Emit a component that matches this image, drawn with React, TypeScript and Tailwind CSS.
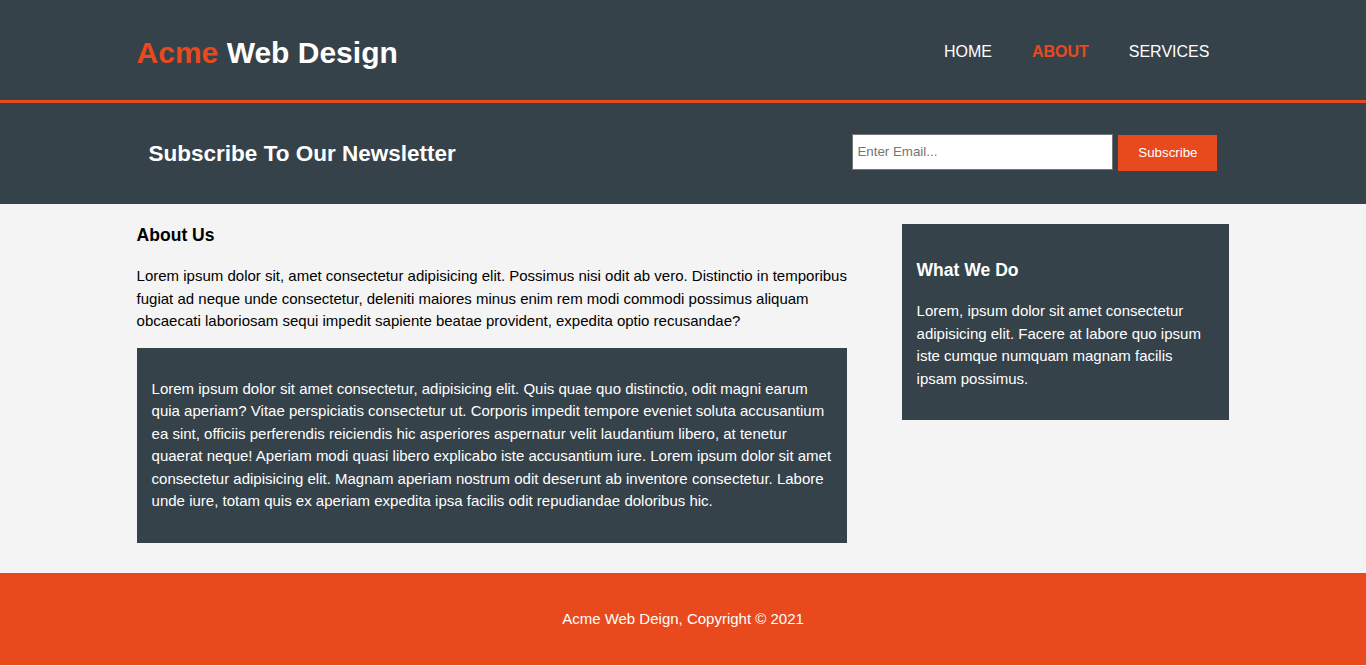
const navLinks = [
  { label: "Home", current: false },
  { label: "About", current: true },
  { label: "Services", current: false },
];

function Header() {
  return (
    <header className="h-[103px] bg-[#35424a] pt-[30px] text-white border-b-[3px] border-[#e8491d]">
      <div className="w-[80%] mx-auto flex justify-between">
        <h1 className="text-[30px] font-bold leading-[1.5]">
          <span className="text-[#e8491d]">Acme</span> Web Design
        </h1>
        <nav className="mt-[10px]">
          <ul className="flex">
            {navLinks.map((link) => (
              <li key={link.label} className="px-[20px]">
                <a
                  href="#"
                  className={
                    link.current
                      ? "text-[16px] uppercase font-bold text-[#e8491d]"
                      : "text-[16px] uppercase text-white"
                  }
                >
                  {link.label}
                </a>
              </li>
            ))}
          </ul>
        </nav>
      </div>
    </header>
  );
}

function Newsletter() {
  return (
    <section className="h-[101px] bg-[#35424a] px-[15px] text-white">
      <div className="w-[80%] h-full mx-auto flex items-center justify-between">
        <h1 className="text-[22.5px] font-bold leading-[1.5]">Subscribe To Our Newsletter</h1>
        <form className="flex items-start gap-[5px] -mt-[3px]" onSubmit={(e) => e.preventDefault()}>
          <input
            type="email"
            placeholder="Enter Email..."
            className="w-[261px] h-[36px] px-[4px] bg-white border border-[#767676] text-[13.33px] text-black placeholder:text-[#757575] outline-none"
          />
          <button
            type="submit"
            className="w-[99px] h-[36px] mt-[1px] bg-[#e8491d] text-white text-[13.33px]"
          >
            Subscribe
          </button>
        </form>
      </div>
    </section>
  );
}

function Main() {
  return (
    <section className="pb-[30px]">
      <div className="w-[80%] mx-auto flex justify-between items-start">
        <article className="w-[65%]">
          <h3 className="my-[17.55px] text-[17.55px] font-bold">About Us</h3>
          <p className="my-[15px]">
            Lorem ipsum dolor sit, amet consectetur adipisicing elit. Possimus nisi odit ab vero. Distinctio in
            temporibus fugiat ad neque unde consectetur, deleniti maiores minus enim rem modi commodi possimus
            aliquam obcaecati laboriosam sequi impedit sapiente beatae provident, expedita optio recusandae?
          </p>
          <div className="bg-[#35424a] text-white p-[15px]">
            <p className="my-[15px]">
              Lorem ipsum dolor sit amet consectetur, adipisicing elit. Quis quae quo distinctio, odit magni
              earum quia aperiam? Vitae perspiciatis consectetur ut. Corporis impedit tempore eveniet soluta
              accusantium ea sint, officiis perferendis reiciendis hic asperiores aspernatur velit laudantium
              libero, at tenetur quaerat neque! Aperiam modi quasi libero explicabo iste accusantium iure. Lorem
              ipsum dolor sit amet consectetur adipisicing elit. Magnam aperiam nostrum odit deserunt ab
              inventore consectetur. Labore unde iure, totam quis ex aperiam expedita ipsa facilis odit
              repudiandae doloribus hic.
            </p>
          </div>
        </article>
        <aside className="w-[30%] mt-[20px] bg-[#35424a] text-white p-[15px]">
          <h3 className="my-[17.55px] text-[17.55px] font-bold">What We Do</h3>
          <p className="my-[15px]">
            Lorem, ipsum dolor sit amet consectetur adipisicing elit. Facere at labore quo ipsum iste cumque
            numquam magnam facilis ipsam possimus.
          </p>
        </aside>
      </div>
    </section>
  );
}

export default function App() {
  return (
    <div className="min-h-[666px] bg-[#f4f4f4] text-[15px] leading-[1.5] text-black font-['Liberation_Sans',Arial,Helvetica,sans-serif]">
      <Header />
      <Newsletter />
      <Main />
      <footer className="bg-[#e8491d] text-white text-center p-[20px]">
        <p className="my-[15px]">Acme Web Deign, Copyright © 2021</p>
      </footer>
    </div>
  );
}
